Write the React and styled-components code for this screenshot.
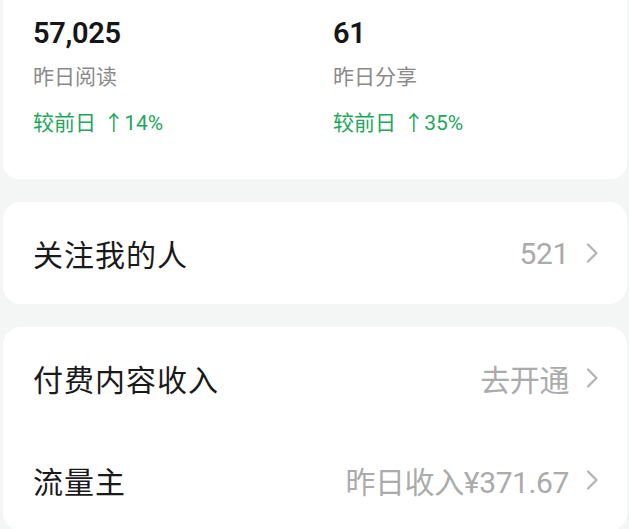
import React from "react";
import styled, { createGlobalStyle } from "styled-components";

const GlobalStyle = createGlobalStyle`
  html, body {
    margin: 0;
    padding: 0;
    background: #f4f6f6;
    font-family: "Roboto", "Noto Sans CJK SC", sans-serif;
    overflow: hidden;
  }
`;

const stats = [
  { value: "57,025", label: "昨日阅读", change: "14%" },
  { value: "61", label: "昨日分享", change: "35%" },
];

const rows = [
  [{ title: "关注我的人", extra: "521" }],
  [
    { title: "付费内容收入", extra: "去开通" },
    { title: "流量主", extra: "昨日收入¥371.67" },
  ],
];

const Chevron = () => (
  <svg width="14" height="22" viewBox="0 0 14 22" fill="none">
    <path
      d="M3 2.5 L11.5 11 L3 19.5"
      stroke="#b3b3b3"
      strokeWidth="2.2"
      strokeLinecap="round"
      strokeLinejoin="round"
    />
  </svg>
);

const App = () => {
  return (
    <>
      <GlobalStyle />
      <Page>
        <StatsCard>
          {stats.map((s) => (
            <Stat key={s.label}>
              <Value>{s.value}</Value>
              <Label>{s.label}</Label>
              <Change>
                较前日 <span>↑{s.change}</span>
              </Change>
            </Stat>
          ))}
        </StatsCard>
        {rows.map((group, i) => (
          <ListCard key={i}>
            {group.map((r) => (
              <Row key={r.title}>
                <Title>{r.title}</Title>
                <Extra>
                  {r.extra}
                  <Chevron />
                </Extra>
              </Row>
            ))}
          </ListCard>
        ))}
      </Page>
    </>
  );
};

const Page = styled.div`
  width: 629px;
  height: 529px;
  padding: 0 2px 0 3px;
  box-sizing: border-box;
  display: flex;
  flex-direction: column;
  gap: 23px;
`;

const StatsCard = styled.div`
  background: #fff;
  border-radius: 0 0 16px 16px;
  height: 179px;
  flex-shrink: 0;
  display: grid;
  grid-template-columns: 300px 1fr;
  padding: 14px 0 0 30px;
  box-sizing: border-box;
`;

const Stat = styled.div`
  display: flex;
  flex-direction: column;
`;

const Value = styled.div`
  font-size: 29px;
  font-weight: 600;
  color: #161616;
  line-height: 38px;
  letter-spacing: -0.3px;
`;

const Label = styled.div`
  font-size: 21px;
  color: #8a8a8a;
  line-height: 28px;
  margin-top: 11px;
`;

const Change = styled.div`
  font-size: 21px;
  color: #22a75a;
  line-height: 28px;
  margin-top: 18px;
  span {
    margin-left: 2px;
  }
`;

const ListCard = styled.div`
  background: #fff;
  border-radius: 18px;
  flex-shrink: 0;
  display: flex;
  flex-direction: column;
`;

const Row = styled.div`
  height: 102px;
  display: flex;
  align-items: center;
  justify-content: space-between;
  padding: 0 28px 0 30px;
`;

const Title = styled.div`
  font-size: 30px;
  color: #1a1a1a;
  letter-spacing: 1px;
`;

const Extra = styled.div`
  display: flex;
  align-items: center;
  gap: 16px;
  font-size: 30px;
  color: #ababab;
  letter-spacing: -0.4px;
`;

export default App;
